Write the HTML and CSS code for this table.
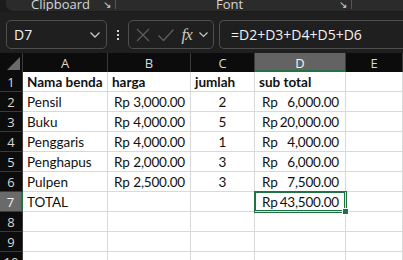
FILE: index.html
```html
<!DOCTYPE html>
<html lang="en">
<head>
  <meta charset="UTF-8">
  <title>Daftar Belanja - Sheet1</title>
  <link rel="stylesheet" href="styles.css">
</head>
<body>

  <!-- Ribbon (bottom edge of Home tab groups) -->
  <div class="ribbon">
    <div class="ribbon-panel">
      <div class="group group-clipboard">
        <span class="group-label">Clipboard</span>
        <span class="launcher">&#8600;</span>
      </div>
      <div class="group group-font">
        <span class="group-label">Font</span>
        <span class="launcher">&#8600;</span>
      </div>
    </div>
  </div>

  <!-- Name box + formula bar -->
  <div class="formula-bar">
    <div class="name-box">
      <span>D7</span>
      <svg width="12" height="8" viewBox="0 0 12 8"><path d="M1.5 1.5 L6 6 L10.5 1.5" fill="none" stroke="#c8c8c8" stroke-width="1.3"/></svg>
    </div>
    <div class="grip">
      <i></i><i></i><i></i>
    </div>
    <div class="fx-box">
      <svg width="16" height="16" viewBox="0 0 16 16"><path d="M2 2 L14 14 M14 2 L2 14" stroke="#5c5c5c" stroke-width="1.3"/></svg>
      <svg width="18" height="16" viewBox="0 0 18 16"><path d="M1.5 8.5 L6.5 13.5 L16.5 2.5" fill="none" stroke="#5c5c5c" stroke-width="1.3"/></svg>
      <span class="fx">fx</span>
      <svg width="11" height="8" viewBox="0 0 11 8"><path d="M1.5 1.5 L5.5 5.5 L9.5 1.5" fill="none" stroke="#c8c8c8" stroke-width="1.2"/></svg>
    </div>
    <div class="formula-input">=D2+D3+D4+D5+D6</div>
  </div>

  <!-- Worksheet -->
  <div class="sheet">
    <div class="corner"><span class="corner-mark"></span></div>
    <div class="col-head">A</div>
    <div class="col-head">B</div>
    <div class="col-head">C</div>
    <div class="col-head active">D</div>
    <div class="col-head">E</div>

    <div class="row-head">1</div>
    <div class="cell bold">Nama benda</div>
    <div class="cell bold">harga</div>
    <div class="cell bold">jumlah</div>
    <div class="cell bold">sub total</div>
    <div class="cell"></div>

    <div class="row-head">2</div>
    <div class="cell">Pensil</div>
    <div class="cell money"><span>Rp</span><span class="num">3,000.00</span></div>
    <div class="cell center">2</div>
    <div class="cell money wide"><span>Rp</span><span class="num">6,000.00</span></div>
    <div class="cell"></div>

    <div class="row-head">3</div>
    <div class="cell">Buku</div>
    <div class="cell money"><span>Rp</span><span class="num">4,000.00</span></div>
    <div class="cell center">5</div>
    <div class="cell money wide"><span>Rp</span><span class="num">20,000.00</span></div>
    <div class="cell"></div>

    <div class="row-head">4</div>
    <div class="cell">Penggaris</div>
    <div class="cell money"><span>Rp</span><span class="num">4,000.00</span></div>
    <div class="cell center">1</div>
    <div class="cell money wide"><span>Rp</span><span class="num">4,000.00</span></div>
    <div class="cell"></div>

    <div class="row-head">5</div>
    <div class="cell">Penghapus</div>
    <div class="cell money"><span>Rp</span><span class="num">2,000.00</span></div>
    <div class="cell center">3</div>
    <div class="cell money wide"><span>Rp</span><span class="num">6,000.00</span></div>
    <div class="cell"></div>

    <div class="row-head">6</div>
    <div class="cell">Pulpen</div>
    <div class="cell money"><span>Rp</span><span class="num">2,500.00</span></div>
    <div class="cell center">3</div>
    <div class="cell money wide"><span>Rp</span><span class="num">7,500.00</span></div>
    <div class="cell"></div>

    <div class="row-head active">7</div>
    <div class="cell">TOTAL</div>
    <div class="cell"></div>
    <div class="cell"></div>
    <div class="cell money wide selected"><span>Rp</span><span class="num">43,500.00</span><i class="fill-handle"></i></div>
    <div class="cell"></div>

    <div class="row-head">8</div>
    <div class="cell"></div><div class="cell"></div><div class="cell"></div><div class="cell"></div><div class="cell"></div>

    <div class="row-head">9</div>
    <div class="cell"></div><div class="cell"></div><div class="cell"></div><div class="cell"></div><div class="cell"></div>

    <div class="row-head">10</div>
    <div class="cell"></div><div class="cell"></div><div class="cell"></div><div class="cell"></div><div class="cell"></div>
  </div>

</body>
</html>
```

FILE: styles.css
```css
body {
  margin: 0;
  padding: 0;
  background: #1f1f1f;
  font-family: "Open Sans", "Noto Sans", sans-serif;
  overflow: hidden;
}

/* Ribbon */
.ribbon {
  height: 12px;
  background: #1b1b1b;
}

.ribbon-panel {
  height: 11px;
  margin-left: 6px;
  background: #2b2b2b;
  border-radius: 0 0 0 7px;
  display: flex;
  overflow: hidden;
}

.group {
  display: flex;
  align-items: flex-end;
  position: relative;
  border-right: 1px solid #555;
  height: 9px;
}

.group-label {
  color: #d6d6d6;
  font-size: 13px;
  line-height: 13px;
  margin-bottom: -2px;
}

.launcher {
  color: #d6d6d6;
  font-size: 10px;
  line-height: 10px;
  position: absolute;
  right: 4px;
  bottom: 0;
}

.group-clipboard {
  width: 110px;
  padding-left: 25px;
  box-sizing: border-box;
}

.group-font {
  width: 236px;
  padding-left: 100px;
  box-sizing: border-box;
}

/* Formula bar */
.formula-bar {
  display: flex;
  align-items: center;
  height: 29px;
  padding: 8px 0 4px 6px;
}

.name-box,
.fx-box,
.formula-input {
  height: 29px;
  box-sizing: border-box;
  border: 1px solid #4f4f4f;
  border-radius: 5px;
  display: flex;
  align-items: center;
  color: #f2f2f2;
  font-size: 14px;
}

.name-box {
  width: 101px;
  padding: 0 5px 0 7px;
  justify-content: space-between;
}

.grip {
  width: 21px;
  display: flex;
  flex-direction: column;
  align-items: center;
  gap: 2px;
}

.grip i {
  width: 2px;
  height: 2px;
  background: #cfcfcf;
}

.fx-box {
  width: 86px;
  padding: 0 4px 0 6px;
  justify-content: space-between;
}

.fx {
  font-family: "Liberation Serif", serif;
  font-style: italic;
  font-size: 17px;
  color: #c8c8c8;
  letter-spacing: -1px;
}

.formula-input {
  flex: 1;
  margin-left: 5px;
  padding-left: 11px;
  border-right: none;
  border-radius: 5px 0 0 5px;
}

/* Worksheet grid */
.sheet {
  display: grid;
  grid-template-columns: 23px 85px 83px 64px 91px 1fr;
  grid-template-rows: 19px repeat(10, 20px);
}

.corner,
.col-head,
.row-head {
  background: #0c0c0c;
  color: #d8d8d8;
  font-size: 13px;
  display: flex;
  align-items: center;
  justify-content: center;
  box-sizing: border-box;
}

.corner {
  position: relative;
  border-right: 1px solid #3a3a3a;
}

.corner-mark {
  position: absolute;
  right: 2px;
  bottom: 2px;
  width: 0;
  height: 0;
  border-left: 13px solid transparent;
  border-bottom: 13px solid #6a6a6a;
}

.col-head {
  border-right: 1px solid #3a3a3a;
  padding-top: 1px;
}

.col-head.active {
  background: #636363;
  color: #f4f4f4;
  border-bottom: 2px solid #217346;
  padding-top: 2px;
}

.row-head {
  border-bottom: 1px solid #3a3a3a;
  border-right: 1px solid #3a3a3a;
}

.row-head.active {
  background: #6a6a6a;
  color: #f4f4f4;
  border-right: 2px solid #217346;
}

.cell {
  background: #ffffff;
  border-right: 1px solid #d9d9d9;
  border-bottom: 1px solid #d9d9d9;
  font-family: "Lato", "Open Sans", sans-serif;
  font-size: 13.5px;
  color: #111;
  padding: 1px 4px 0;
  display: flex;
  align-items: center;
  box-sizing: border-box;
  white-space: nowrap;
  min-width: 0;
}

.cell.bold {
  font-weight: bold;
}

.cell.center {
  justify-content: center;
}

/* accounting format: currency left, amount right */
.cell.money {
  justify-content: space-between;
  padding: 1px 5px 0 6px;
}

.cell.money.wide {
  padding: 1px 6px 0 7px;
}

.num {
  letter-spacing: -0.2px;
}

.cell.selected {
  position: relative;
  box-shadow: 0 0 0 1px #217346, inset 0 0 0 1px #217346;
}

.fill-handle {
  position: absolute;
  right: -4px;
  bottom: -4px;
  width: 5px;
  height: 5px;
  background: #217346;
  border: 1px solid #fff;
}
```
